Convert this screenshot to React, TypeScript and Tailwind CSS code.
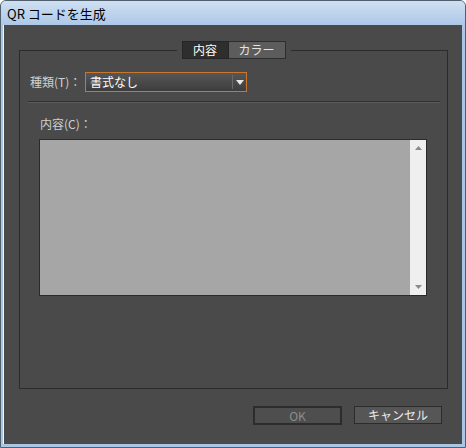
import React from "react";

const font = { fontFamily: '"Noto Sans CJK JP", "Liberation Sans", sans-serif' };

export default function App() {
  return (
    <div
      style={font}
      className="w-[466px] h-[448px] flex flex-col border border-[#51606f] rounded-t-[6px] bg-[#a9c6e4] overflow-hidden"
    >
      {/* title bar */}
      <div className="h-[24px] shrink-0 flex items-center pl-[6px] bg-gradient-to-b from-[#cfe0f2] to-[#adc8e7] text-[13px] text-black leading-none">
        QR コードを生成
      </div>

      {/* body */}
      <div className="flex-1 ml-[2px] mr-[3px] mb-[3px] border-l border-[#f2f6fb] bg-[#4a4a4a] flex flex-col">
        <div className="h-[25px] shrink-0" />

        {/* group box */}
        <div className="ml-[15px] mr-[14px] h-[339px] border border-[#2b2b2b] flex flex-col">
          <div className="flex justify-center -mt-[10px]">
            <div className="flex px-[5px] bg-[#4a4a4a]">
              <div className="h-[18px] w-[47px] flex items-center justify-center bg-[#2e2e2e] border border-[#262626] text-[12px] text-white">
                内容
              </div>
              <div className="h-[18px] w-[57px] flex items-center justify-center bg-[#5c5c5c] border border-[#2e2e2e] border-l-0 text-[12px] text-[#e4e4e4]">
                カラー
              </div>
            </div>
          </div>

          <div className="flex items-center mt-[13px] pl-[10px]">
            <span className="w-[55px] text-[12px] text-[#d0d0d0]">種類(T)：</span>
            <div className="w-[162px] h-[20px] border border-[#c8782e] bg-gradient-to-b from-[#575757] to-[#3d3d3d] flex items-center">
              <span className="flex-1 pl-[4px] text-[12px] text-white leading-none">書式なし</span>
              <div className="w-px h-[14px] bg-[#2c2c2c] border-r border-[#6a6a6a]" />
              <div className="w-[13px] flex items-center justify-center">
                <svg width="8" height="5" viewBox="0 0 8 5">
                  <path d="M0 0 L8 0 L4 5 Z" fill="#e8e8e8" />
                </svg>
              </div>
            </div>
          </div>

          <div className="mt-[9px] ml-[8px] mr-[7px] h-[2px] border-t border-[#303030] border-b border-b-[#5a5a5a]" />

          <div className="mt-[13px] pl-[20px] text-[12px] leading-[16px] text-[#d0d0d0]">内容(C)：</div>

          <div className="mt-[7px] ml-[19px] w-[388px] h-[157px] border border-[#2a2a2a] flex">
            <div className="flex-1 bg-[#a6a6a6]" />
            <div className="w-[16px] bg-[#efefef] flex flex-col items-center justify-between py-[6px]">
              <svg width="7" height="4" viewBox="0 0 7 4">
                <path d="M3.5 0 L7 4 L0 4 Z" fill="#8a8a8a" />
              </svg>
              <svg width="7" height="4" viewBox="0 0 7 4">
                <path d="M0 0 L7 0 L3.5 4 Z" fill="#8a8a8a" />
              </svg>
            </div>
          </div>
        </div>

        {/* buttons */}
        <div className="flex justify-end gap-[12px] mt-[17px] mr-[20px]">
          <div className="w-[89px] h-[19px] border-2 border-[#2c2c2c] bg-[#4e4e4e] flex items-center justify-center text-[12px] text-[#8c8c8c]">
            OK
          </div>
          <div className="w-[88px] h-[18px] border border-[#2c2c2c] bg-[#565656] flex items-center justify-center text-[12px] text-[#ececec]">
            キャンセル
          </div>
        </div>
      </div>
    </div>
  );
}
